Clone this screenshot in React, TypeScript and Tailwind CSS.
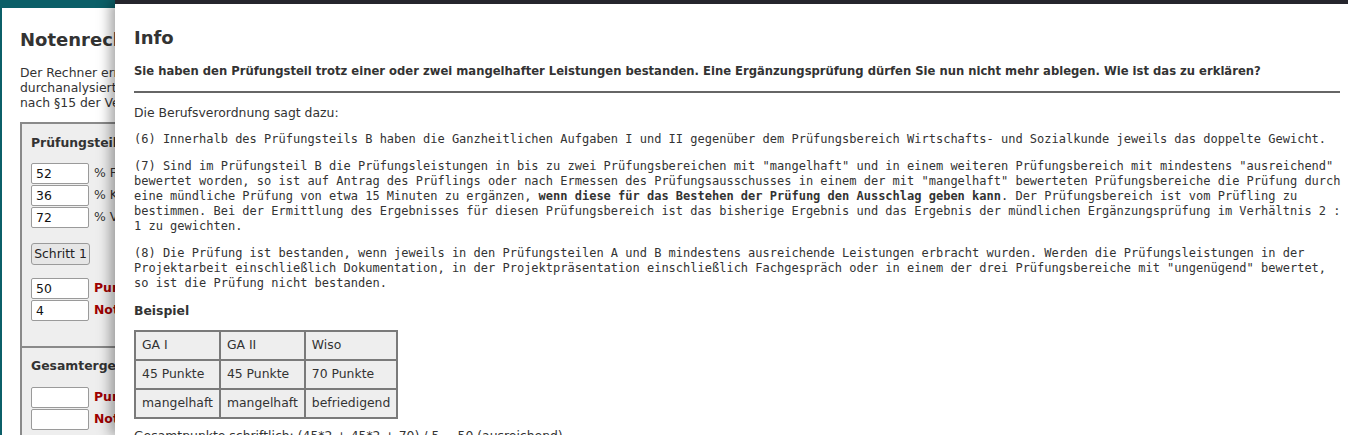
import React from 'react'

const rows = [
    ['GA I', 'GA II', 'Wiso'],
    ['45 Punkte', '45 Punkte', '70 Punkte'],
    ['mangelhaft', 'mangelhaft', 'befriedigend'],
];

function Field({ value, label, red }: { value: string; label: string; red?: boolean }) {
    return (
        <div className="flex items-center h-[22px]">
            <input
                readOnly
                value={value}
                className="w-[58px] h-[21px] border border-[#9a9a9a] rounded-[2px] bg-white px-[4px] text-[12.4px] text-[#111] outline-none"
            />
            <span className={red ? 'ml-[5px] font-bold text-[#a00000] whitespace-nowrap' : 'ml-[5px] whitespace-nowrap'}>{label}</span>
        </div>
    );
}

function Calculator() {
    return (
        <div className="ml-[2px] mt-[8px] h-[427px] bg-white pl-[18px] pt-[20px]">
            <h1 className="text-[18px] leading-[24px] font-bold whitespace-nowrap">Notenrechner Fachinformatiker</h1>
            <p className="mt-[13px] text-[12.4px] leading-[15px] whitespace-nowrap">
                Der Rechner ermittelt das Ergebnis der Abschlussprüfung und wurde gründlich<br />
                durchanalysiert. Die Berechnung der Punkte und Noten erfolgt<br />
                nach §15 der Verordnung über die Berufsausbildung.
            </p>
            <div className="mt-[12px] w-[320px] border-2 border-[#8a8a8a] bg-[#eeeeee] pl-[9px] pt-[11px] pb-[25px] text-[12.4px]">
                <h3 className="font-bold leading-[15px]">Prüfungsteil B</h3>
                <div className="mt-[12px]">
                    <Field value="52" label="% Fachqualifikation" />
                    <Field value="36" label="% Kernqualifikation" />
                    <Field value="72" label="% Volkswirtschaft" />
                </div>
                <button className="mt-[15px] w-[59px] h-[22px] rounded-[3px] border border-[#9a9a9a] bg-[#e6e6e6] text-[12.4px] text-[#222]">
                    Schritt 1
                </button>
                <div className="mt-[12px]">
                    <Field value="50" label="Punkte" red />
                    <Field value="4" label="Note" red />
                </div>
            </div>
            <div className="w-[320px] border-2 border-t-0 border-[#8a8a8a] bg-[#eeeeee] pl-[9px] pt-[10px] pb-[10px] text-[12.4px]">
                <h3 className="font-bold leading-[15px]">Gesamtergebnis</h3>
                <div className="mt-[13px]">
                    <Field value="" label="Punkte" red />
                    <Field value="" label="Note" red />
                </div>
            </div>
        </div>
    );
}

function InfoModal() {
    return (
        <div className="absolute left-[115px] top-0 bottom-0 right-0 border-t-4 border-[#25252d] bg-white shadow-[-5px_0_12px_rgba(0,0,0,0.35)] pl-[19px] pt-[22px] text-[#333]">
            <div className="w-[1210px]">
                <h2 className="text-[18px] leading-[24px] font-bold">Info</h2>
                <p className="mt-[14px] text-[11.6px] leading-[15px] font-bold whitespace-nowrap">
                    Sie haben den Prüfungsteil trotz einer oder zwei mangelhafter Leistungen bestanden. Eine Ergänzungsprüfung dürfen Sie nun nicht mehr ablegen. Wie ist das zu erklären?
                </p>
                <div className="mt-[12px] h-[2px] w-[1206px] bg-[#666]" />
                <p className="mt-[12px] text-[12.4px] leading-[15px]">Die Berufsverordnung sagt dazu:</p>
                <div className="font-['DejaVu_Sans_Mono',monospace] text-[12px] leading-[15px]">
                    <p className="mt-[12px]">
                        (6) Innerhalb des Prüfungsteils B haben die Ganzheitlichen Aufgaben I und II gegenüber dem Prüfungsbereich Wirtschafts- und Sozialkunde jeweils das doppelte Gewicht.
                    </p>
                    <p className="mt-[12px]">
                        (7) Sind im Prüfungsteil B die Prüfungsleistungen in bis zu zwei Prüfungsbereichen mit "mangelhaft" und in einem weiteren Prüfungsbereich mit mindestens "ausreichend" bewertet worden, so ist auf Antrag des Prüflings oder nach Ermessen des Prüfungsausschusses in einem der mit "mangelhaft" bewerteten Prüfungsbereiche die Prüfung durch eine mündliche Prüfung von etwa 15 Minuten zu ergänzen, <b>wenn diese für das Bestehen der Prüfung den Ausschlag geben kann</b>. Der Prüfungsbereich ist vom Prüfling zu bestimmen. Bei der Ermittlung des Ergebnisses für diesen Prüfungsbereich ist das bisherige Ergebnis und das Ergebnis der mündlichen Ergänzungsprüfung im Verhältnis 2 : 1 zu gewichten.
                    </p>
                    <p className="mt-[12px]">
                        (8) Die Prüfung ist bestanden, wenn jeweils in den Prüfungsteilen A und B mindestens ausreichende Leistungen erbracht wurden. Werden die Prüfungsleistungen in der Projektarbeit einschließlich Dokumentation, in der Projektpräsentation einschließlich Fachgespräch oder in einem der drei Prüfungsbereiche mit "ungenügend" bewertet, so ist die Prüfung nicht bestanden.
                    </p>
                </div>
                <p className="mt-[12px] text-[12.4px] leading-[15px] font-bold">Beispiel</p>
                <table className="mt-[12px] border-collapse bg-[#eeeeee] text-[12.4px]">
                    <tbody>
                        {rows.map((row, i) => (
                            <tr key={i}>
                                {row.map((cell, j) => (
                                    <td key={j} className="h-[29px] border-2 border-[#7a7a7a] px-[6px] py-0 whitespace-nowrap">{cell}</td>
                                ))}
                            </tr>
                        ))}
                    </tbody>
                </table>
                <p className="mt-[9px] text-[12.4px] leading-[15px]">
                    Gesamtpunkte schriftlich: (45*2 + 45*2 + 70) / 5 = 50 (ausreichend)
                </p>
            </div>
        </div>
    );
}

export default function App() {
    return (
        <div className="relative h-[435px] w-full overflow-hidden bg-[#0b5f68] font-['DejaVu_Sans',Verdana,sans-serif] text-[#333]">
            <Calculator />
            <InfoModal />
        </div>
    );
}
